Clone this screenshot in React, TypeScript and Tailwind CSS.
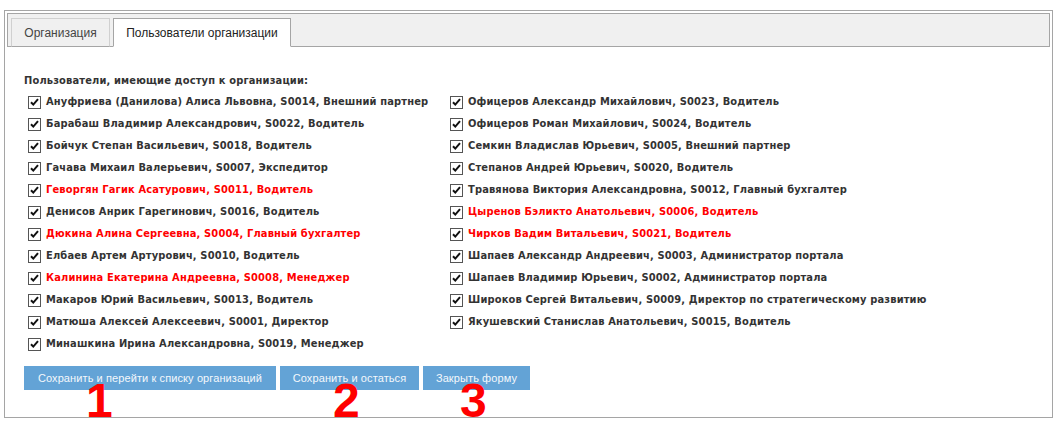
import React from "react";

type U = { t: string; red?: boolean };

const left: U[] = [
  { t: "Ануфриева (Данилова) Алиса Львовна, S0014, Внешний партнер" },
  { t: "Барабаш Владимир Александрович, S0022, Водитель" },
  { t: "Бойчук Степан Васильевич, S0018, Водитель" },
  { t: "Гачава Михаил Валерьевич, S0007, Экспедитор" },
  { t: "Геворгян Гагик Асатурович, S0011, Водитель", red: true },
  { t: "Денисов Анрик Гарегинович, S0016, Водитель" },
  { t: "Дюкина Алина Сергеевна, S0004, Главный бухгалтер", red: true },
  { t: "Елбаев Артем Артурович, S0010, Водитель" },
  { t: "Калинина Екатерина Андреевна, S0008, Менеджер", red: true },
  { t: "Макаров Юрий Васильевич, S0013, Водитель" },
  { t: "Матюша Алексей Алексеевич, S0001, Директор" },
  { t: "Минашкина Ирина Александровна, S0019, Менеджер" },
];

const right: U[] = [
  { t: "Офицеров Александр Михайлович, S0023, Водитель" },
  { t: "Офицеров Роман Михайлович, S0024, Водитель" },
  { t: "Семкин Владислав Юрьевич, S0005, Внешний партнер" },
  { t: "Степанов Андрей Юрьевич, S0020, Водитель" },
  { t: "Травянова Виктория Александровна, S0012, Главный бухгалтер" },
  { t: "Цыренов Бэликто Анатольевич, S0006, Водитель", red: true },
  { t: "Чирков Вадим Витальевич, S0021, Водитель", red: true },
  { t: "Шапаев Александр Андреевич, S0003, Администратор портала" },
  { t: "Шапаев Владимир Юрьевич, S0002, Администратор портала" },
  { t: "Широков Сергей Витальевич, S0009, Директор по стратегическому развитию" },
  { t: "Якушевский Станислав Анатольевич, S0015, Водитель" },
];

const bold = { fontFamily: "'DejaVu Sans Condensed', 'DejaVu Sans', sans-serif" };
const reg = { fontFamily: "'Liberation Sans', Arial, sans-serif" };

function Box() {
  return (
    <span className="w-[13px] h-[13px] border border-[#555] bg-white flex items-center justify-center shrink-0">
      <svg width="11" height="11" viewBox="0 0 11 11">
        <path d="M2 5.2 L4.3 7.6 L9 2.2" fill="none" stroke="#111" strokeWidth="2" />
      </svg>
    </span>
  );
}

function Row({ u }: { u: U }) {
  return (
    <div className="h-[22px] flex items-center gap-[5px]">
      <Box />
      <span
        style={bold}
        className={
          "text-[11px] font-bold whitespace-nowrap tracking-[0.15px] " +
          (u.red ? "text-[#ff0000]" : "text-[#333333]")
        }
      >
        {u.t}
      </span>
    </div>
  );
}

export default function App() {
  return (
    <div
      className="w-[1062px] h-[426px] bg-white relative overflow-hidden pl-[4px] pt-[10px]"
      style={reg}
    >
      <div className="w-[1049px] h-[408px] border border-[#a5a5a5] p-[2px]">
        <div className="h-[34px] border border-[#a5a5a5] bg-[#f0f0f0] flex items-end pl-[3px] gap-[3px]">
          <div className="h-[29px] -mb-px w-[99px] border border-[#d0d0d0] border-b-[#a5a5a5] bg-[#f0f0f0] flex items-center justify-center text-[12px] text-[#444]">
            Организация
          </div>
          <div className="h-[29px] -mb-px w-[178px] border border-[#a5a5a5] border-b-white bg-white flex items-center justify-center text-[12px] text-[#222]">
            Пользователи организации
          </div>
        </div>
        <div className="pl-[17px] pt-[25px]">
          <div style={bold} className="h-[18px] flex items-center text-[11px] font-bold text-[#333333] tracking-[0.15px]">
            Пользователи, имеющие доступ к организации:
          </div>
          <div className="flex pl-[4px] mt-[1px]">
            <div className="w-[422px] flex flex-col">
              {left.map((u, i) => (
                <Row key={i} u={u} />
              ))}
            </div>
            <div className="flex flex-col">
              {right.map((u, i) => (
                <Row key={i} u={u} />
              ))}
            </div>
          </div>
          <div className="flex gap-[4px] mt-[11px]">
            <button className="h-[24px] w-[252px] bg-[#63a3d6] text-[#f4f8fc] text-[11px] tracking-[0.1px] whitespace-nowrap">
              Сохранить и перейти к списку организаций
            </button>
            <button className="h-[24px] w-[139px] bg-[#63a3d6] text-[#f4f8fc] text-[11px] tracking-[0.1px] whitespace-nowrap">
              Сохранить и остаться
            </button>
            <button className="h-[24px] w-[107px] bg-[#63a3d6] text-[#f4f8fc] text-[11px] tracking-[0.1px] whitespace-nowrap">
              Закрыть форму
            </button>
          </div>
        </div>
      </div>
      <div className="absolute left-[86px] top-[377px] text-[48px] font-bold text-[#ff0000] leading-none">
        1
      </div>
      <div className="absolute left-[333px] top-[377px] text-[48px] font-bold text-[#ff0000] leading-none">
        2
      </div>
      <div className="absolute left-[460px] top-[377px] text-[48px] font-bold text-[#ff0000] leading-none">
        3
      </div>
    </div>
  );
}
